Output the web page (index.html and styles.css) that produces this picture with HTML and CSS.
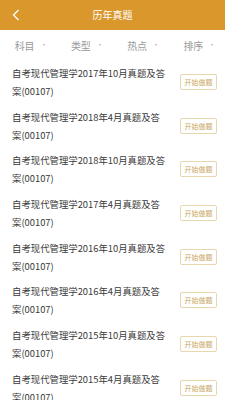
FILE: index.html
```html
<!DOCTYPE html>
<html lang="zh">
<head>
<meta charset="utf-8">
<link rel="stylesheet" href="styles.css">
</head>
<body>
<div class="app">
  <header class="topbar">
    <svg class="back" width="8" height="12" viewBox="0 0 8 12"><path d="M6.5 1 L1.5 6 L6.5 11" fill="none" stroke="#fff" stroke-width="1.3"/></svg>
    <div class="title">历年真题</div>
  </header>
  <nav class="filters">
    <div class="filter"><span>科目</span><i class="tri"></i></div>
    <div class="filter"><span>类型</span><i class="tri"></i></div>
    <div class="filter"><span>热点</span><i class="tri"></i></div>
    <div class="filter"><span>排序</span><i class="tri"></i></div>
  </nav>
  <ul class="list">
    <li class="item"><p class="name">自考现代管理学2017年10月真题及答<br>案(00107)</p><span class="btn">开始做题</span></li>
    <li class="item"><p class="name">自考现代管理学2018年4月真题及答<br>案(00107)</p><span class="btn">开始做题</span></li>
    <li class="item"><p class="name">自考现代管理学2018年10月真题及答<br>案(00107)</p><span class="btn">开始做题</span></li>
    <li class="item"><p class="name">自考现代管理学2017年4月真题及答<br>案(00107)</p><span class="btn">开始做题</span></li>
    <li class="item"><p class="name">自考现代管理学2016年10月真题及答<br>案(00107)</p><span class="btn">开始做题</span></li>
    <li class="item"><p class="name">自考现代管理学2016年4月真题及答<br>案(00107)</p><span class="btn">开始做题</span></li>
    <li class="item"><p class="name">自考现代管理学2015年10月真题及答<br>案(00107)</p><span class="btn">开始做题</span></li>
    <li class="item"><p class="name">自考现代管理学2015年4月真题及答<br>案(00107)</p><span class="btn">开始做题</span></li>
  </ul>
</div>
</body>
</html>
```
FILE: styles.css
```css
html, body {
  margin: 0;
  padding: 0;
  background: #fff;
}
body {
  font-family: "Noto Sans CJK SC", "Noto Sans", sans-serif;
  width: 225px;
  height: 400px;
  overflow: hidden;
}
.app {
  width: 225px;
  height: 400px;
  overflow: hidden;
}
.topbar {
  position: relative;
  height: 30px;
  background: #d9972c;
  display: flex;
  align-items: center;
  justify-content: center;
}
.back {
  position: absolute;
  left: 12px;
  top: 9px;
}
.title {
  color: #fff;
  font-size: 10px;
  line-height: 30px;
}
.filters {
  height: 30px;
  display: grid;
  grid-template-columns: repeat(4, 1fr);
  align-items: center;
}
.filter {
  display: flex;
  align-items: center;
  justify-content: center;
  gap: 8px;
  color: #9a9a9a;
  font-size: 10px;
  padding-left: 3px;
}
.tri {
  width: 0;
  height: 0;
  border-left: 1.5px solid transparent;
  border-right: 1.5px solid transparent;
  border-top: 2px solid #b0b0b0;
}
.list {
  list-style: none;
  margin: 0;
  padding: 0;
}
.item {
  display: flex;
  align-items: center;
  padding: 3.85px 8px 3.85px 12px;
}
.name {
  margin: 0;
  flex: 1;
  font-size: 9.4px;
  line-height: 18px;
  color: #3a3a3a;
  white-space: nowrap;
}
.btn {
  width: 35px;
  height: 14px;
  border: 1px solid #e6d7ae;
  border-radius: 2px;
  color: #c9a865;
  font-size: 7px;
  line-height: 14px;
  text-align: center;
}
```
